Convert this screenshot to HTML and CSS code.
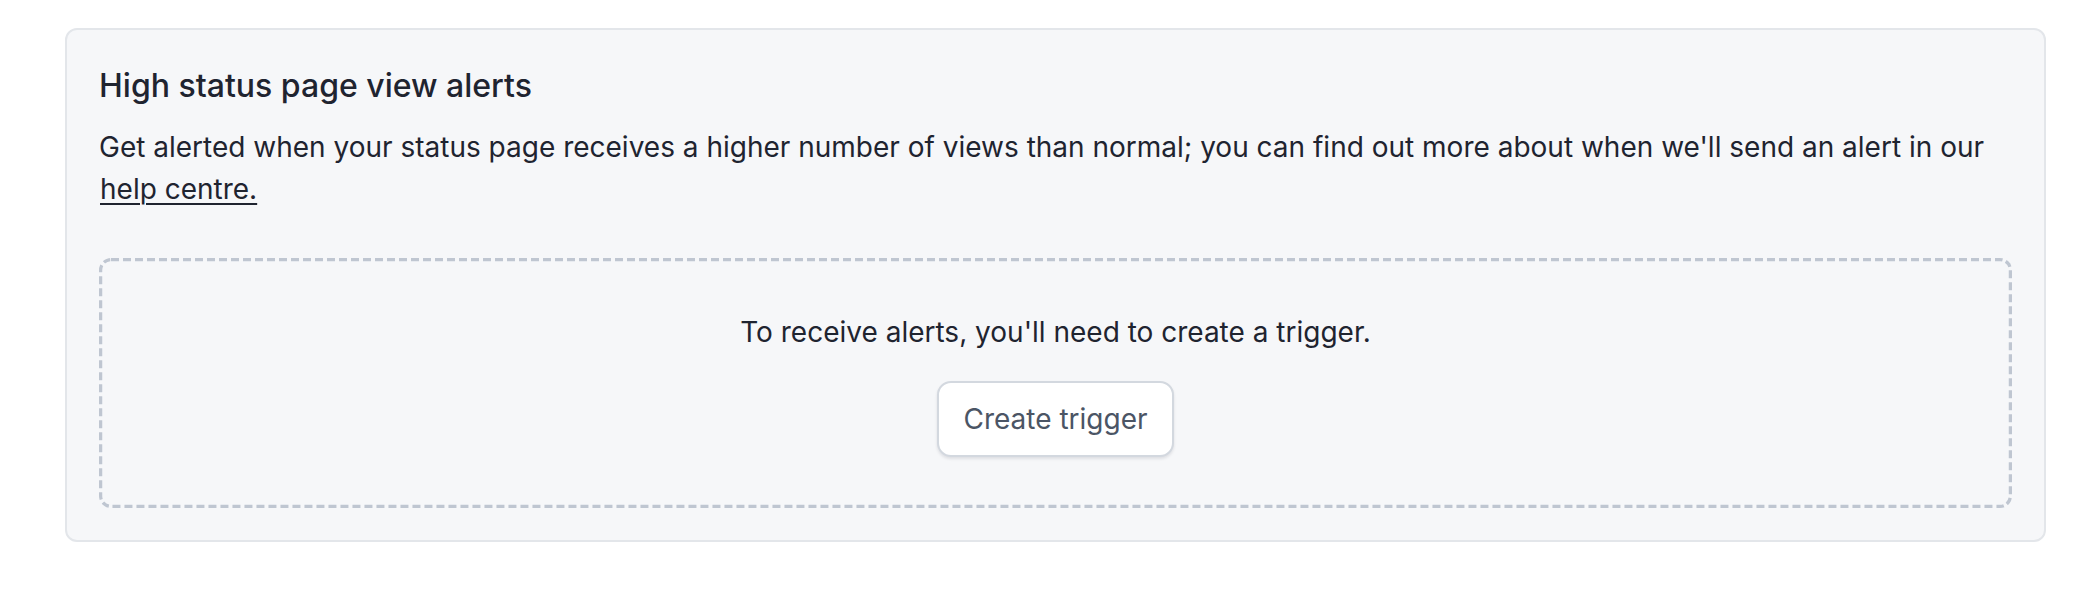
FILE: index.html
```html
<!DOCTYPE html>
<html lang="en">
<head>
<meta charset="utf-8">
<title>High status page view alerts</title>
<link rel="stylesheet" href="styles.css">
</head>
<body>
  <section class="card">
    <h2 class="card-title">High status page view alerts</h2>
    <p class="card-desc">Get alerted when your status page receives a higher number of views than normal; you can find out more about when we'll send an alert in our <a class="link" href="#">help centre.</a></p>
    <div class="empty">
      <p class="empty-text">To receive alerts, you'll need to create a trigger.</p>
      <button class="btn" type="button">Create trigger</button>
    </div>
  </section>
</body>
</html>
```

FILE: styles.css
```css
html, body {
  margin: 0;
  padding: 0;
  background: #ffffff;
}

body {
  font-family: Inter, "Noto Sans", "Liberation Sans", sans-serif;
  color: #1f2430;
}

.card {
  margin: 28px 28px 0 65px;
  background: #f6f7f9;
  border: 2px solid #e3e6ea;
  border-radius: 12px;
  padding: 32px 32px 32px 32px;
}

.card-title {
  margin: 0;
  font-size: 32px;
  line-height: 48px;
  font-weight: 500;
  color: #1f2430;
}

.card-desc {
  margin: 16px 0 0 0;
  font-size: 28px;
  line-height: 42px;
  font-weight: 400;
  color: #1f2430;
}

.link {
  color: #1f2430;
  text-decoration: underline;
  text-underline-offset: 4px;
  text-decoration-thickness: 2px;
  margin-left: 1px;
}

.empty {
  margin-top: 48px;
  border-radius: 12px;
  background-image: url("data:image/svg+xml,%3Csvg xmlns='http://www.w3.org/2000/svg' width='100%25' height='100%25'%3E%3Crect x='0' y='0' width='100%25' height='100%25' rx='12' ry='12' fill='none' stroke='%23bfc6d1' stroke-width='6.5' stroke-dasharray='8 4'/%3E%3C/svg%3E");
  padding: 53px 32px 51px;
  display: flex;
  flex-direction: column;
  align-items: center;
  gap: 28px;
}

.empty-text {
  margin: 0;
  font-size: 28px;
  line-height: 42px;
  color: #1f2430;
}

.btn {
  font-family: inherit;
  font-size: 28px;
  line-height: 40px;
  color: #4b5565;
  background: #ffffff;
  border: 2px solid #d3d8df;
  border-radius: 14px;
  padding: 16px 24px;
  box-shadow: 0 2px 3px rgba(16, 24, 40, 0.1);
  cursor: pointer;
}
```
